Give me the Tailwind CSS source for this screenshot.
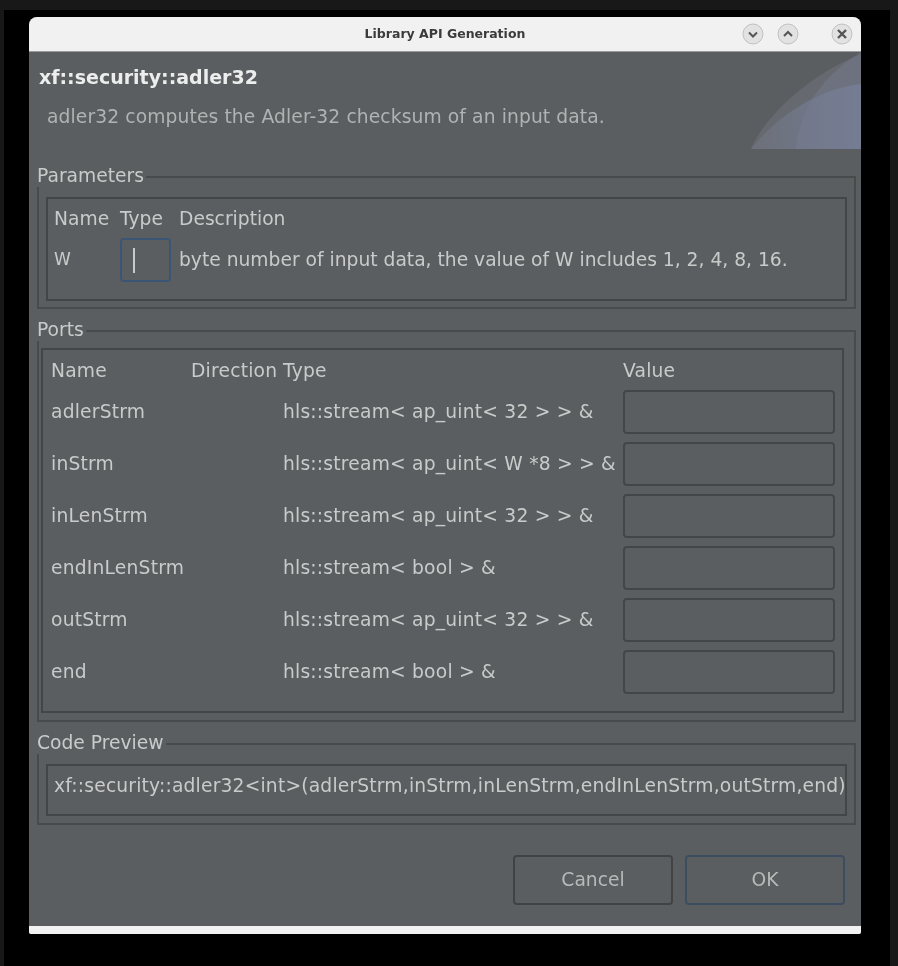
<!DOCTYPE html>
<html>
<head>
<meta charset="utf-8">
<script src="https://cdn.jsdelivr.net/npm/@tailwindcss/browser@4"></script>
</head>
<body class="bg-black">
<div class="h-[966px] w-[898px] overflow-hidden bg-[#181818] pl-1 pr-2 pt-[10px] font-['DejaVu_Sans',sans-serif] text-[18.7px] text-[#c9cbcb]">
  <div class="h-[956px] bg-black pl-[25px] pt-[7px] blur-[0.7px]">
    <div class="flex h-[917px] w-[832px] flex-col overflow-hidden rounded-t-lg rounded-b-[2px] bg-[#5b5e60]">
      <div class="relative flex h-[35px] shrink-0 items-center justify-center border-b border-[#9a9c9c] bg-[#f1f1f2]">
        <span class="text-[12.5px] font-bold text-[#3b3b3b]">Library API Generation</span>
        <div class="absolute right-[8px] top-[6px] flex gap-[13px]">
          <svg width="22" height="22" viewBox="0 0 22 22"><circle cx="11" cy="11" r="10" fill="#e2e2e2" stroke="#c0c0c0"/><path d="M7 9.5 11 13.5 15 9.5" fill="none" stroke="#555" stroke-width="2"/></svg>
          <svg class="mr-[19px]" width="22" height="22" viewBox="0 0 22 22"><circle cx="11" cy="11" r="10" fill="#e2e2e2" stroke="#c0c0c0"/><path d="M7 13 11 9 15 13" fill="none" stroke="#555" stroke-width="2"/></svg>
          <svg width="22" height="22" viewBox="0 0 22 22"><circle cx="11" cy="11" r="10" fill="#e2e2e2" stroke="#c0c0c0"/><path d="M7 7 15 15M15 7 7 15" fill="none" stroke="#555" stroke-width="2.4"/></svg>
        </div>
      </div>
      <div class="relative h-[98px] shrink-0 pl-[10px] pt-[14px]">
        <svg class="absolute right-0 top-0" width="110" height="97" viewBox="0 0 110 97">
          <defs><linearGradient id="g" x1="0" y1="0" x2="1" y2="0"><stop offset="0" stop-color="#6c7079"/><stop offset="1" stop-color="#727b92"/></linearGradient></defs>
          <path d="M0 97C15 62 60 22 110 2V97Z" fill="#666a70"/>
          <path d="M0 97C28 62 70 36 110 32V97Z" fill="url(#g)"/>
          <path d="M45 97C48 66 62 30 110 0V97Z" fill="#7a8298" fill-opacity="0.35"/>
        </svg>
        <h1 class="relative text-[19px] font-bold leading-[22px] text-[#eceded]">xf::security::adler32</h1>
        <p class="relative ml-[8px] mt-[18px] leading-[22px] tracking-[0.11px] text-[#b0b3b3]">adler32 computes the Adler-32 checksum of an input data.</p>
      </div>
      <div class="flex min-w-0 flex-1 flex-col pl-[8px] pr-[5px]">
        <fieldset class="mt-[17px] h-[142px] min-w-0 border-2 border-[#484b4c]">
          <legend class="-ml-[2px] pr-[2px] leading-[20px]"><span class="relative -top-[1px]">Parameters</span></legend>
          <div class="ml-[7px] mr-[7px] mt-[10px] h-[104px] border-2 border-[#434647]">
            <div class="grid grid-cols-[66px_59px_1fr] items-center gap-y-[7px] pl-[6px] pt-[8px]">
              <span class="leading-[24px]">Name</span><span class="leading-[24px]">Type</span><span class="leading-[24px]">Description</span>
              <span class="text-[17px]">W</span>
              <div class="flex h-[44px] w-[51px] items-center rounded-[4px] border-2 border-[#3b5675] pl-[11px]"><div class="h-[25px] w-[2px] bg-[#c8c8c8]"></div></div>
              <span class="whitespace-nowrap">byte number of input data, the value of W includes 1, 2, 4, 8, 16.</span>
            </div>
          </div>
        </fieldset>
        <fieldset class="mt-[12px] h-[401px] min-w-0 border-2 border-[#484b4c]">
          <legend class="-ml-[2px] pr-[2px] leading-[20px]"><span class="relative -top-[1px]">Ports</span></legend>
          <div class="ml-[2px] mr-[10px] mt-[7px] h-[365px] border-2 border-[#434647]">
            <div class="grid grid-cols-[140px_92px_340px_212px] items-center gap-y-[8px] pl-[8px] tracking-[0.2px]">
              <span class="h-[32px] leading-[42px]">Name</span><span class="h-[32px] leading-[42px]">Direction</span><span class="h-[32px] leading-[42px]">Type</span><span class="h-[32px] leading-[42px]">Value</span>
              <span>adlerStrm</span><span></span><span class="whitespace-nowrap">hls::stream&lt; ap_uint&lt; 32 &gt; &gt; &amp;</span><div class="h-[44px] rounded-[4px] border-2 border-[#434647]"></div>
              <span>inStrm</span><span></span><span class="whitespace-nowrap">hls::stream&lt; ap_uint&lt; W *8 &gt; &gt; &amp;</span><div class="h-[44px] rounded-[4px] border-2 border-[#434647]"></div>
              <span>inLenStrm</span><span></span><span class="whitespace-nowrap">hls::stream&lt; ap_uint&lt; 32 &gt; &gt; &amp;</span><div class="h-[44px] rounded-[4px] border-2 border-[#434647]"></div>
              <span>endInLenStrm</span><span></span><span class="whitespace-nowrap">hls::stream&lt; bool &gt; &amp;</span><div class="h-[44px] rounded-[4px] border-2 border-[#434647]"></div>
              <span>outStrm</span><span></span><span class="whitespace-nowrap">hls::stream&lt; ap_uint&lt; 32 &gt; &gt; &amp;</span><div class="h-[44px] rounded-[4px] border-2 border-[#434647]"></div>
              <span>end</span><span></span><span class="whitespace-nowrap">hls::stream&lt; bool &gt; &amp;</span><div class="h-[44px] rounded-[4px] border-2 border-[#434647]"></div>
            </div>
          </div>
        </fieldset>
        <fieldset class="mt-[12px] h-[91px] min-w-0 border-2 border-[#484b4c]">
          <legend class="-ml-[2px] pr-[2px] leading-[20px]"><span class="relative -top-[1px]">Code Preview</span></legend>
          <div class="ml-[7px] mr-[7px] mt-[10px] h-[52px] overflow-hidden whitespace-nowrap border-2 border-[#434647] pl-[6px] leading-[40px] tracking-[0.18px]">xf::security::adler32&lt;int&gt;(adlerStrm,inStrm,inLenStrm,endInLenStrm,outStrm,end);</div>
        </fieldset>
        <div class="mr-[11px] mt-[30px] flex justify-end gap-[12px] text-[#b8baba]">
          <button class="h-[50px] w-[160px] rounded-[4px] border-2 border-[#404344]">Cancel</button>
          <button class="h-[50px] w-[160px] rounded-[4px] border-2 border-[#3c4d60]">OK</button>
        </div>
      </div>
      <div class="h-[8px] shrink-0 bg-[#f2f2f2]"></div>
    </div>
  </div>
</div>
</body>
</html>
